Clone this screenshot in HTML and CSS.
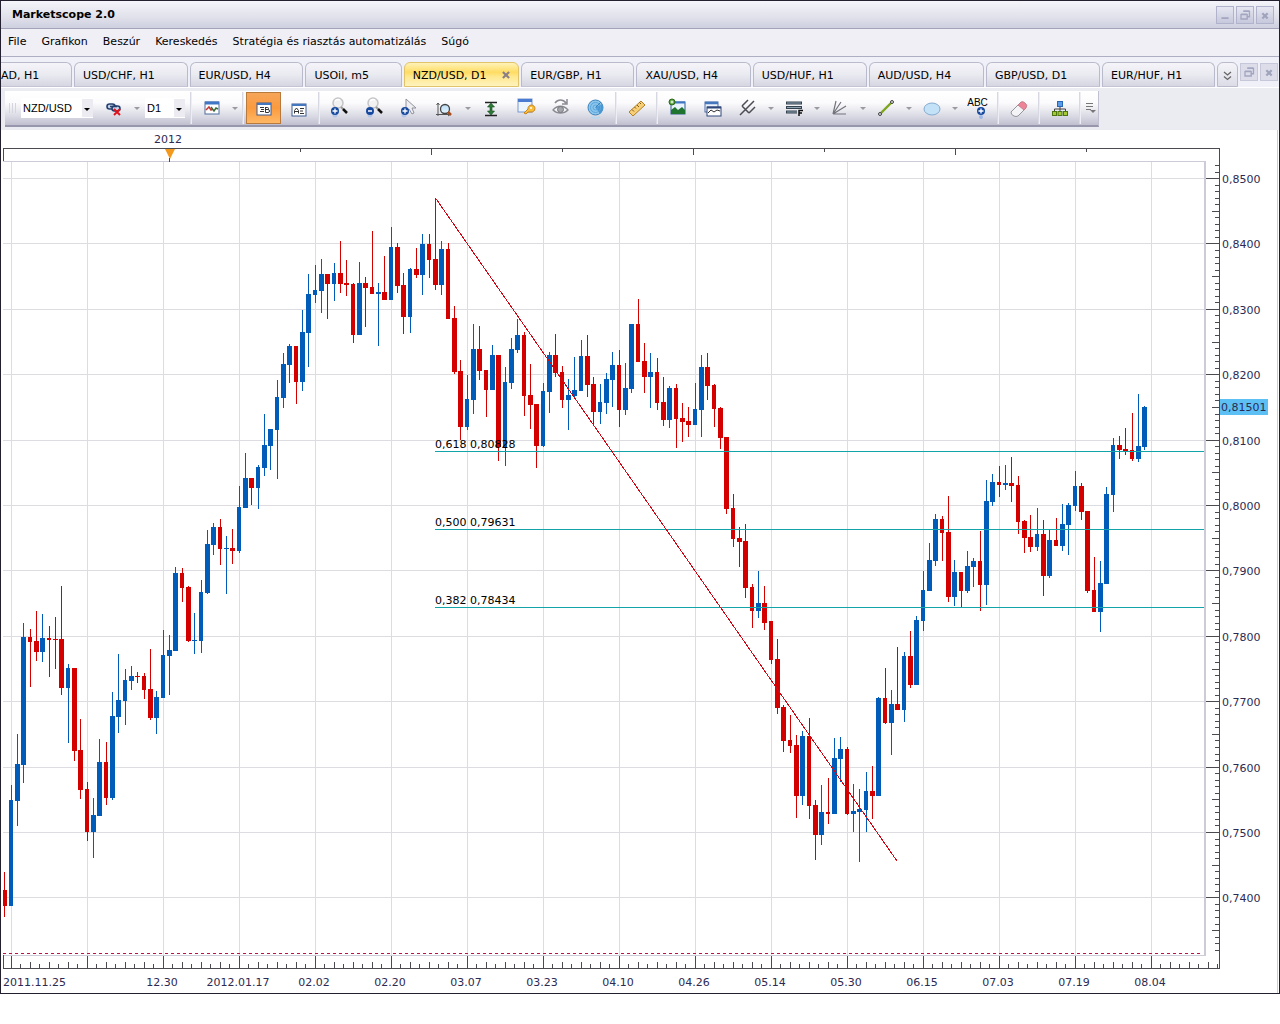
FILE: index.html
```html
<!DOCTYPE html>
<html lang="hu">
<head>
<meta charset="utf-8">
<title>Marketscope 2.0</title>
<link rel="stylesheet" href="styles.css">
</head>
<body>
<svg class="defs" aria-hidden="true">
  <linearGradient id="glass" x1="0" y1="0" x2="0" y2="1"><stop offset="0" stop-color="#b9dcf5"/><stop offset="1" stop-color="#e4f4ff"/></linearGradient>
  <symbol id="restore" viewBox="0 0 18 18"><path d="M7 5h7v6h-3M7 4.500h7" fill="none" stroke="#a3a6c0" stroke-width="1.500"/><path d="M4.500 8.500h7v5h-7zM4.500 8h7" fill="none" stroke="#a3a6c0" stroke-width="1.500"/></symbol>
  <symbol id="close" viewBox="0 0 18 18"><path d="M6 7l6 6M12 7l-6 6" stroke="#a0a3bc" stroke-width="2.500"/></symbol>
  <symbol id="plus" viewBox="0 0 8 8"><circle cx="4" cy="4" r="4" fill="#174a9e"/><path d="M4 1.500v5M1.500 4h5" stroke="#fff" stroke-width="1.300"/></symbol>
  <symbol id="lens" viewBox="0 0 24 24"><circle cx="10" cy="6" r="5" fill="#f1f1f1" stroke="#c4c4c8" stroke-width="1.500"/><path d="M7 4a4 4 0 0 1 5-1" fill="none" stroke="#fff" stroke-width="1.500"/><path d="M13 10l2 2" stroke="#999" stroke-width="2"/><path d="M15 12l4 4" stroke="#111" stroke-width="2.500"/><circle cx="7" cy="18" r="2.500" fill="#9db7e6" opacity=".6"/></symbol>
</svg>

<div class="window">
  <header class="titlebar">
    <h1>Marketscope 2.0</h1>
    <div class="winbtns">
      <button class="winbtn" aria-label="Minimize"><svg viewBox="0 0 18 18"><path d="M5 12.500h8" stroke="#a3a6c0" stroke-width="2"/></svg></button>
      <button class="winbtn" aria-label="Restore"><svg><use href="#restore"/></svg></button>
      <button class="winbtn" aria-label="Close"><svg><use href="#close"/></svg></button>
    </div>
  </header>

  <nav class="menu">
    <button>File</button><button>Grafikon</button><button>Beszúr</button><button>Kereskedés</button><button>Stratégia és riasztás automatizálás</button><button>Súgó</button>
  </nav>

  <div class="tabstrip">
    <div class="tabs">
      <button class="tab cut">AD, H1</button>
      <button class="tab">USD/CHF, H1</button>
      <button class="tab">EUR/USD, H4</button>
      <button class="tab">USOil, m5</button>
      <button class="tab active">NZD/USD, D1<svg class="tabclose" viewBox="0 0 9 9"><path d="M1 1l7 7M8 1l-7 7" stroke="#8a7f86" stroke-width="2.400"/></svg></button>
      <button class="tab">EUR/GBP, H1</button>
      <button class="tab">XAU/USD, H4</button>
      <button class="tab">USD/HUF, H1</button>
      <button class="tab">AUD/USD, H4</button>
      <button class="tab">GBP/USD, D1</button>
      <button class="tab">EUR/HUF, H1</button>
    </div>
    <button class="more" aria-label="More tabs"><svg viewBox="0 0 9 10"><path d="M1 1l3.500 3L8 1M1 5.500l3.500 3L8 5.500" fill="none" stroke="#666" stroke-width="1.300"/></svg></button>
    <div class="winbtns small">
      <button class="winbtn" aria-label="Restore chart"><svg><use href="#restore"/></svg></button>
      <button class="winbtn" aria-label="Close chart"><svg><use href="#close"/></svg></button>
    </div>
  </div>

  <div class="toolrow">
    <div class="toolbar">
      <span class="grip"></span>
      <label class="combo symbol"><select aria-label="Instrument"><option>NZD/USD</option></select></label>
      <button class="tool" aria-label="Unlink"><svg viewBox="0 0 24 24"><g fill="#c8d4ea" stroke="#26406e" stroke-width="1.600"><rect x="5" y="7" width="8" height="5" rx="2.500"/><rect x="10" y="9" width="8" height="5" rx="2.500"/><path d="M8 9.500h7"/></g><path d="M12 12l6 6M18 12l-6 6" stroke="#e0121b" stroke-width="2"/></svg></button>
      <button class="drop" aria-label="Link options"></button>
      <label class="combo period"><select aria-label="Period"><option>D1</option></select></label>
      <span class="sep"></span>
      <button class="tool" aria-label="Chart type"><svg viewBox="0 0 24 24"><rect x="5" y="5" width="14" height="12" fill="#fff" stroke="#4b6d9c"/><path d="M5 6h14" stroke="#3f76c5" stroke-width="3"/><path d="M6 13l3-3 2 3 2-1" fill="none" stroke="#c33" stroke-width="1.500"/><path d="M11 10l3 4 2-3 2 1" fill="none" stroke="#3a6b3a" stroke-width="1.500"/></svg></button>
      <button class="drop" aria-label="Chart type list"></button>
      <span class="sep"></span>
      <button class="tool on" aria-label="Bid prices"><svg viewBox="0 0 24 24"><rect x="5" y="6" width="14" height="12" fill="#fff" stroke="#3d5c92"/><path d="M5 7h14" stroke="#4577bf" stroke-width="2"/><path d="M8 10.500h4M9 12.500h3M8 14.500h4M13.500 10v5.500h2.500a1.300 1.300 0 0 0 0-3h-2.500M13.500 10.500h2a1 1 0 0 1 0 2" fill="none" stroke="#333"/></svg></button>
      <button class="tool" aria-label="Ask prices"><svg viewBox="0 0 24 24"><rect x="5" y="7" width="14" height="12" fill="#fff" stroke="#3d5c92"/><path d="M5 8h14" stroke="#4577bf" stroke-width="2"/><path d="M7.500 16.500v-3l2-2.500 2 2.500v3M8 14.500h3M13 11.500h4M13 14h3M13 16.500h4" fill="none" stroke="#333"/></svg></button>
      <span class="sep"></span>
      <button class="tool" aria-label="Zoom in"><svg viewBox="0 0 24 24"><use href="#lens"/><use href="#plus" x="3" y="10" width="8" height="8"/></svg></button>
      <button class="tool" aria-label="Zoom out"><svg viewBox="0 0 24 24"><use href="#lens"/><circle cx="7" cy="14" r="4" fill="#174a9e"/><path d="M5 14h4" stroke="#fff" stroke-width="1.500"/></svg></button>
      <button class="tool" aria-label="Cursor"><svg viewBox="0 0 24 24"><path d="M8 2v13l3-3 3 5 2-1-2-5h4z" fill="#ededf2" stroke="#92929c"/><circle cx="6" cy="18" r="2.500" fill="#9db7e6" opacity=".6"/><use href="#plus" x="3" y="10" width="8" height="8"/></svg></button>
      <button class="tool" aria-label="Scale"><svg viewBox="0 0 24 24"><path d="M5 6v13M3.500 8L5 6l1.500 2M3 17.500h14M15 16l2 1.500-2 1.500" fill="none" stroke="#555"/><circle cx="12" cy="12" r="4.500" fill="url(#glass)" stroke="#444" stroke-width="1.300"/><path d="M15 15l3 3" stroke="#a84f1d" stroke-width="2.500"/></svg></button>
      <button class="drop" aria-label="Scale options"></button>
      <button class="tool" aria-label="Fit height"><svg viewBox="0 0 24 24"><path d="M6 5.500h12M6 18.500h12" stroke="#222" stroke-width="1.500"/><path d="M12 6l3.500 4H13v4h2.500L12 18l-3.500-4H11v-4H8.500z" fill="#2c7a35" stroke="#164a1c" stroke-width=".6"/></svg></button>
      <button class="tool" aria-label="Properties"><svg viewBox="0 0 24 24"><rect x="4" y="2" width="14" height="13" fill="#eef4fc" stroke="#7898cc"/><path d="M4 3.500h14" stroke="#4a7bd0" stroke-width="3"/><path d="M10 16l4-4a3.500 3.500 0 1 1 3 3h-3l-2 2z" fill="#f7bd3b" stroke="#c7831a"/><circle cx="17" cy="11" r="1" fill="#fff"/></svg></button>
      <button class="tool" aria-label="Show hidden"><svg viewBox="0 0 24 24"><path d="M6 6c3-4 8-4 11 0M18 2v5h-5" fill="none" stroke="#8b8b92" stroke-width="1.500"/><path d="M4 13c4-5 11-5 15 0-4 4-11 4-15 0z" fill="#f5f5f7" stroke="#8b8b92" stroke-width="1.300"/><circle cx="11.500" cy="12.500" r="3" fill="#a5a5ac" stroke="#77777f"/></svg></button>
      <button class="tool" aria-label="World"><svg viewBox="0 0 24 24"><circle cx="11.500" cy="10.500" r="7.500" fill="#8cc6ec" stroke="#3c83ba"/><path d="M11.500 10.500L18 7a8 8 0 0 1-2 10z" fill="#4a98d2"/><circle cx="11.500" cy="10.500" r="5" fill="none" stroke="#5ba6dd"/><circle cx="11.500" cy="10.500" r="2.500" fill="none" stroke="#5ba6dd"/><path d="M11.500 10.500L17 5" stroke="#3c83ba"/><path d="M7 20q4.500 2 9 0" stroke="#b9d8ee" stroke-width="2" fill="none"/></svg></button>
      <span class="sep"></span>
      <button class="tool" aria-label="Ruler"><svg viewBox="0 0 24 24"><path d="M4 15L16 4l4 4L8 19z" fill="#f7cf77" stroke="#b37f27"/><path d="M7 12.500l2 2M9.500 10l1.500 1.500M12 8l2 2M14.500 5.500L16 7" stroke="#7f5a18"/></svg></button>
      <span class="sep"></span>
      <button class="tool" aria-label="Add indicator"><svg viewBox="0 0 24 24"><rect x="5" y="5" width="14" height="12" fill="#e9f3fc" stroke="#2e5a91"/><path d="M5 5.500h14" stroke="#3f76c5" stroke-width="2"/><path d="M5 17v-4l4-3 3 3 4-3 3 3v4z" fill="#1f7530"/><circle cx="6" cy="5" r="3" fill="#4f9f35" stroke="#2c6a1c"/><path d="M6 3.500v3M4.500 5h3" stroke="#fff"/></svg></button>
      <button class="tool" aria-label="Windows"><svg viewBox="0 0 24 24"><rect x="4" y="5" width="13" height="10" fill="#eef4fc" stroke="#4a6ca8"/><path d="M4 6h13" stroke="#4577bf" stroke-width="2.500"/><rect x="6" y="10" width="14" height="9" fill="#fff" stroke="#2e477a"/><path d="M6 10.500h14" stroke="#2e477a" stroke-width="2"/><path d="M7 16l3-3 3 2 3-2 3 1" fill="none" stroke="#333"/></svg></button>
      <button class="tool" aria-label="Pitchfork"><svg viewBox="0 0 24 24"><path d="M4 18L9 13M6 9l7 7M6 9l6-6M9.500 12.500L18 4M13 16l6-6" stroke="#4c4c55" stroke-width="1.500" fill="none"/></svg></button>
      <button class="drop" aria-label="Pitchfork list"></button>
      <button class="tool" aria-label="Fibonacci"><svg viewBox="0 0 24 24"><path d="M4 6h16M4 10.500h16M4 15h11" stroke="#35434e" stroke-width="3"/><path d="M5 6h14M5 10.500h14M5 15h10" stroke="#8da3b0"/><path d="M17 19v-5.500h4M17 16h3" stroke="#111" stroke-width="1.500" fill="none"/></svg></button>
      <button class="drop" aria-label="Fibonacci list"></button>
      <button class="tool" aria-label="Fan"><svg viewBox="0 0 24 24"><path d="M5 17L8 4M5 17l8-12M5 17l13-8M5 17h13" stroke="#73737c" stroke-width="1.200"/></svg></button>
      <button class="drop" aria-label="Fan list"></button>
      <button class="tool" aria-label="Line"><svg viewBox="0 0 24 24"><path d="M6 17L18 5" stroke="#7ea51c" stroke-width="2.400"/><circle cx="6" cy="17" r="1.500" fill="#ddd" stroke="#444"/><circle cx="18" cy="5" r="1.500" fill="#ddd" stroke="#444"/></svg></button>
      <button class="drop" aria-label="Line list"></button>
      <button class="tool" aria-label="Ellipse"><svg viewBox="0 0 24 24"><ellipse cx="12" cy="12" rx="8" ry="6" fill="#c3e1f7" stroke="#86acd0"/></svg></button>
      <button class="drop" aria-label="Shape list"></button>
      <button class="tool label" aria-label="Text label"><span>ABC</span><svg class="mini" viewBox="0 0 8 12"><circle cx="4" cy="10" r="2" fill="#9db7e6"/><use href="#plus" width="8" height="8"/></svg></button>
      <span class="sep"></span>
      <button class="tool" aria-label="Eraser"><svg viewBox="0 0 24 24"><path d="M4 15l9-9 6 5-8 8q-2 1-4 0-3-1-3-4z" fill="#f4f4f6" stroke="#94949c"/><path d="M11 8l3-3q2-1 4 1 3 2 1 5l-2 2z" fill="#ee8497" stroke="#c4808c"/></svg></button>
      <span class="sep"></span>
      <button class="tool" aria-label="Structure"><svg viewBox="0 0 24 24"><path d="M12 8v4M6.500 15v-3h11v3M12 12v3" fill="none" stroke="#444"/><rect x="9.500" y="4.500" width="5" height="5" fill="#5b9cea" stroke="#2a66b4"/><g fill="#a5c834" stroke="#4c7611"><rect x="4.500" y="14.500" width="4" height="4"/><rect x="10" y="14.500" width="4" height="4"/><rect x="15.500" y="14.500" width="4" height="4"/></g></svg></button>
      <span class="sep"></span>
      <button class="overflow" aria-label="Toolbar options"><svg viewBox="0 0 12 12"><path d="M1 1.500h7M1 4.500h7M1 7.500h5" stroke="#777"/><path d="M5 8h6l-3 3z" fill="#777"/></svg></button>
    </div>
  </div>

  <main>
    <svg class="chart" id="chart" viewBox="1 130 1278 863" role="img" aria-label="NZD/USD, D1"></svg>
  </main>
</div>
<script src="chart.js"></script>
</body>
</html>
```
FILE: styles.css
```css
* { box-sizing: border-box; }
body { margin: 0; background: #fff; color: #000; font: 11px/14px "DejaVu Sans", Verdana, sans-serif; }
button { margin: 0; padding: 0; border: 0; background: none; font: inherit; color: inherit; white-space: nowrap; }
.defs { position: absolute; width: 0; height: 0; }
.window { border: 1px solid #22202e; background: #efeff6; }

.titlebar { display: flex; align-items: center; justify-content: space-between; height: 28px; padding: 0 5px 0 11px; background: linear-gradient(#f4f4fa, #e0e1ea 60%, #cfd0e0); border-bottom: 1px solid #a2a3b8; }
h1 { margin: 0; padding-top: 1px; font-size: 11px; font-weight: bold; }
.winbtns { display: flex; gap: 2px; }
.winbtn { width: 18px; height: 18px; border: 1px solid #b1b3cc; background: linear-gradient(#e6e7f1, #c6c8dc); }
.winbtn svg { display: block; width: 16px; height: 16px; }

.menu { display: flex; gap: 15px; height: 28px; padding: 0 7px 2px; border-bottom: 1px solid #aeafc2; background: #f0eff5; }

.tabstrip { display: flex; align-items: flex-end; height: 31px; border-bottom: 1px solid #fff; background: #f0f0f8; }
.tabs { display: flex; flex: 1; gap: 2px; min-width: 0; overflow: hidden; }
.tab { position: relative; flex: 1 0 auto; height: 25px; padding: 2px 25px 0 8px; border: 1px solid #b9bacb; border-bottom-color: #c4c4d4; border-radius: 6px 6px 0 0; background: linear-gradient(#f4f4f9, #eaeaf1 50%, #d6d6e2); text-align: left; }
.tab.cut { padding-left: 0; border-left: 0; border-top-left-radius: 0; }
.tab.active { border-color: #e0c36a; background: linear-gradient(#fff3b8, #ffdc62 40%, #ffe88f 60%, #fff3be); }
.tabclose { position: absolute; right: 8px; top: 8px; width: 8px; height: 8px; }
.more { width: 21px; height: 25px; margin: 0 2px; border: 1px solid #b9bacb; border-radius: 6px 6px 0 0; background: linear-gradient(#f4f4f9, #dcdce7); }
.more svg { display: block; width: 9px; height: 10px; margin: 3px auto 0; }
.small { align-self: flex-start; padding: 6px 1px 0 0; }
.small .winbtn { border-color: #c6c7d9; background: #dcdde9; }

.toolrow { height: 42px; padding: 3px 0 0 4px; background: #ebebf2; }
.toolbar { display: flex; align-items: center; width: max-content; height: 36px; background: linear-gradient(#fff, #fbfbfd 35%, #d9d9e4 75%, #bfbfcf); border-bottom: 2px solid #9697ad; border-right: 1px solid #c0c0d0; }
.grip { width: 7px; height: 10px; margin: 0 5px 0 4px; background: repeating-linear-gradient(90deg, #d5d5e0 0 1px, transparent 1px 3px); }
.combo { position: relative; display: flex; height: 20px; background: #fff; }
.combo::before { content: ""; position: absolute; right: 0; top: 1px; width: 11px; height: 18px; background: #ebebf1; }
.combo::after { content: ""; position: absolute; right: 3px; top: 10px; border: 3px solid transparent; border-top-color: #000; border-bottom: 0; }
.combo select { position: relative; width: 100%; padding: 0 0 0 2px; border: 0; background: none; appearance: none; color: #000; font: 11px/20px "Liberation Sans", Arial, sans-serif; }
.symbol { width: 72px; margin: 0 3px 0 0; }
.period { width: 40px; margin: 0 3px; }
.tool { display: flex; align-items: center; justify-content: center; width: 35px; height: 32px; padding-top: 2px; }
.tool svg { display: block; width: 24px; height: 24px; }
.tool.on { border: 1px solid #b8793c; background: linear-gradient(#f5a55b, #fb9a3e 50%, #ffb866); }
.tool.label { flex-direction: column; align-items: center; font: 10px/8px "Liberation Sans", Arial, sans-serif; }
.tool.label .mini { width: 8px; height: 12px; margin-left: 6px; }
.drop { width: 11px; height: 32px; }
.drop::after { content: ""; display: block; width: 0; margin: 0 auto; border: 3px solid transparent; border-top-color: #9a9aa2; border-bottom: 0; }
.sep { width: 2px; height: 32px; margin: 0 2px; border-left: 1px solid #d8d8e2; border-right: 1px solid #ededf3; }
.overflow { width: 15px; height: 32px; }
.overflow svg { display: block; width: 12px; height: 12px; margin: 0 auto; }

main { background: #fff; }
.chart { display: block; width: 100%; height: auto; font: 11px "DejaVu Sans", Verdana, sans-serif; }
.crisp { shape-rendering: crispEdges; }
.grid { fill: #dddde1; }
.plotedge { fill: #cbccd8; }
.axis { fill: #4a4a50; }
.up { fill: #005cb8; }
.down { fill: #d40000; }
.fib { fill: #12a4a8; }
.trend { stroke: #cc0a18; stroke-width: 1; }
.limit { stroke: #c01048; stroke-dasharray: 3 3; }
.scale { fill: #2c2a52; }
.note { fill: #000; }
.tag { fill: #5cc0f4; }
.year { fill: #f39a1e; }
.mid { text-anchor: middle; }
```
FILE: chart.js
```js
// One row per day: colour, high, body top, body bottom, low (chart units, y down).
const days = `
R872,890,906,917 B785,800,906,906 B734,764,801,826 B623,637,765,783 R629,637,642,687 R611,641,652,661
B614,638,652,662 R626,638,640,677 R617,639,640,669 R586,639,688,695 B664,668,688,743 R668,668,751,761
R719,750,790,799 R782,789,832,841 B798,815,832,858 B739,762,816,816 R742,762,798,805 B692,716,798,800
B654,700,717,733 B669,680,701,725 B666,676,681,690 R672,676,677,683 R673,676,690,699 R649,689,718,720
B691,697,718,734 B630,655,698,698 B635,650,656,695 B567,573,651,651 R568,573,588,602 R586,587,641,642
B613,640,641,654 B580,592,641,653 B530,544,593,594 B523,527,545,555 R519,527,549,565 B536,548,549,594
R529,548,551,564 B486,507,551,553 B453,478,508,508 R478,478,488,505 B465,467,488,509 B414,445,468,476
B429,429,446,470 B380,397,430,479 B353,364,398,408 B344,346,365,383 R346,346,382,404 B310,332,382,391
B274,294,333,367 B265,290,295,303 B259,274,291,313 R274,274,284,319 B263,273,284,301 R241,273,284,293
R260,283,285,296 R283,284,335,343 B262,283,335,335 R277,283,288,327 R231,287,294,294 B283,292,294,346
R256,292,300,300 B227,247,300,300 R243,247,286,293 R273,285,317,334 B268,269,317,333 R248,269,275,278
B234,244,275,295 R234,244,260,278 R198,259,285,290 B241,249,285,295 R243,249,319,319 R306,318,372,374
R360,371,427,440 B375,399,427,430 B324,349,400,414 R326,349,371,380 R370,370,390,417 B345,355,390,390
R355,355,447,461 B367,382,447,466 B338,349,383,389 B319,335,350,353 R332,335,396,416 R364,395,405,429
R404,404,446,468 B383,391,446,447 B352,355,392,413 R334,355,373,377 R366,372,400,408 B379,395,400,430
B357,390,396,399 B340,356,391,391 R335,356,385,397 R377,384,412,425 B384,402,412,424 B373,379,403,414
B352,365,380,407 R350,365,410,427 B363,388,410,415 B324,324,389,393 R299,324,362,362 R343,361,377,393
B353,372,377,408 R358,372,403,410 R377,402,420,426 B386,388,420,428 R384,388,419,448 R403,418,422,442
R407,421,425,437 B383,409,425,425 B355,367,410,437 R353,367,386,400 R384,385,409,427 R407,408,438,449
R437,437,509,514 R494,508,539,547 R527,538,542,567 R524,541,588,598 R584,587,611,628 B571,603,611,618
R586,603,623,630 R621,621,660,664 R639,659,708,714 R705,707,741,752 R715,740,746,753 R735,745,796,818
B731,736,796,805 R718,736,806,819 R800,805,835,860 B785,812,835,845 R778,812,814,824 B738,758,814,814
B737,749,759,782 R747,749,814,815 B784,811,814,832 B789,809,812,862 B772,791,810,832 R766,791,796,819
B697,698,796,796 R668,698,723,724 B690,704,723,755 R647,704,710,710 B652,656,710,722 R631,656,685,688
B616,620,685,685 B571,590,621,631 B543,560,591,591 B514,519,561,566 R516,519,533,561 R496,532,597,602
B560,572,597,606 R572,572,591,607 B551,566,591,593 B558,561,567,587 R531,561,585,611 B480,501,585,605
B474,482,502,506 R466,482,485,497 B465,483,485,490 R457,483,486,502 R476,485,522,534 R520,521,538,553
R515,537,547,552 B508,534,547,551 R520,534,576,596 B529,540,576,578 R518,540,546,546 B504,524,546,551
B503,505,525,555 B471,486,506,511 R483,486,512,520 R511,511,591,593 R557,590,612,612 B561,583,612,632
B487,494,584,584 B438,445,495,512 R436,445,450,459 R428,449,451,455 R413,450,459,461 B394,446,459,462
B406,407,447,450`.trim().split(/\s+/);

const out = [];
const box = (cls, x, y, w, h) => out.push(`<rect class="crisp ${cls}" x="${x}" y="${y}" width="${w}" height="${h}"/>`);
const text = (cls, x, y, s) => out.push(`<text class="${cls}" x="${x}" y="${y}">${s}</text>`);
const LEFT = 3, RIGHT = 1204, TOP = 161, BOTTOM = 955, AXIS = 1219, BASE = 968;
const priceY = k => Math.floor(178.6 + 65.39 * k);

// Grid
for (let k = 0; k < 16; k++) box('grid', 11 + 76 * k, TOP, 1, BOTTOM - TOP);
for (let k = 0; k < 12; k++) box('grid', LEFT, priceY(k), RIGHT - LEFT, 1);
box('plotedge', LEFT, TOP, RIGHT - LEFT, 1);
box('plotedge', RIGHT, TOP, 2, BOTTOM - TOP + 1);
box('plotedge', LEFT, BOTTOM, RIGHT - LEFT, 1);
box('plotedge', 1277, 130, 1, 863);

// Outer axes
box('axis', LEFT, 148, AXIS - LEFT + 1, 1);
box('axis', LEFT, 148, 1, 13);
box('axis', AXIS, 148, 1, BASE - 148 + 1);
box('axis', LEFT, BASE, AXIS - LEFT, 1);
box('axis', LEFT, BOTTOM, 1, 13);
for (let k = 0; k < 7; k++) box('axis', 300 + 131 * k, 149, 1, k % 2 ? 6 : 3);
for (let j = 0; j < 128; j++) {
  const h = j % 8 === 0 ? 12 : j % 2 ? 4 : 6;
  box('axis', Math.floor(11 + 9.5 * j), BASE - h, 1, h);
}
for (let j = -2; j < 119; j++) {
  const w = j % 10 === 0 ? 13 : j % 5 === 0 ? 7 : 4;
  box('axis', AXIS - w, Math.floor(178.6 + 6.539 * j), w, 1);
}

// Candles
days.forEach((d, i) => {
  const cls = d[0] === 'R' ? 'down' : 'up';
  const [high, a, b, low] = d.slice(1).split(',').map(Number);
  const x = Math.floor(11.01 + (i - 1) * 19 / 3);
  const whole = (i + 2) % 3 === 0;
  box(cls, x, high, 1, low - high);
  const left = Math.max(x - 2, LEFT);
  box(cls, left, a, x + (whole ? 2 : 3) - left, b - a);
});

// Studies
[[451, '0,618 0,80828'], [529, '0,500 0,79631'], [607, '0,382 0,78434']].forEach(([y, s]) => {
  box('fib', 435, y, RIGHT - 435, 1);
  text('note', 435, y - 3, s);
});
out.push('<line class="crisp trend" x1="435.5" y1="198" x2="897" y2="861"/>');
out.push('<line class="crisp limit" x1="3" y1="953.5" x2="1202" y2="953.5"/>');

// Scale labels
for (let k = 0; k < 12; k++) text('scale', 1222, priceY(k) + 5, '0,' + (8500 - 100 * k));
box('tag', 1220, 399, 48, 16);
text('scale', 1221, 411, '0,81501');
text('scale', 3, 986, '2011.11.25');
['12.30', '2012.01.17', '02.02', '02.20', '03.07', '03.23', '04.10', '04.26', '05.14', '05.30', '06.15', '07.03', '07.19', '08.04']
  .forEach((s, k) => text('scale mid', 162 + 76 * k, 986, s));
text('scale mid', 168, 143, '2012');
out.push('<path class="year" d="M165 149h10l-5 10z"/>');
box('axis', 169, 158, 1, 4);

document.getElementById('chart').innerHTML = out.join('');
```
